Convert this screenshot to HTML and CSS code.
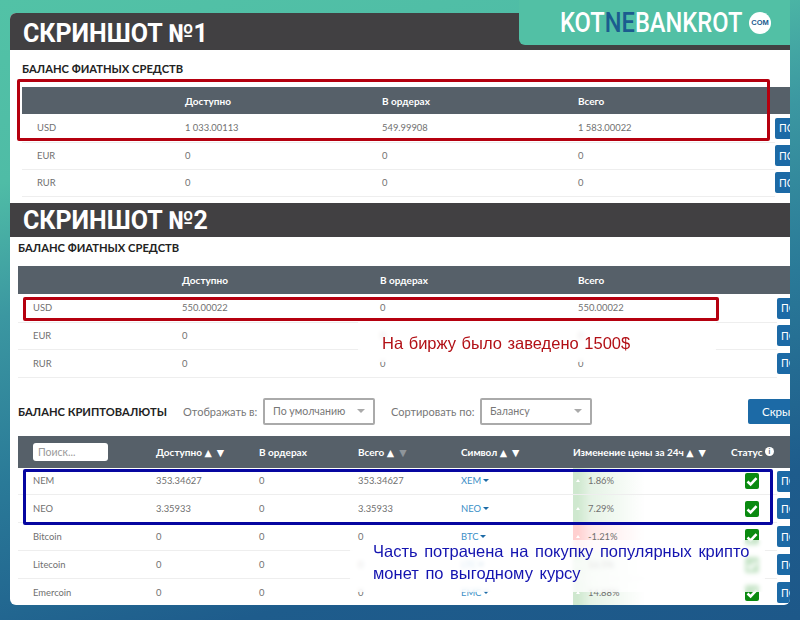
FILE: index.html
```html
<!DOCTYPE html>
<html lang="en">
    <head>
        <meta charset="UTF-8">
        <title>Скриншоты баланса</title>
        <link rel="stylesheet" href="styles.css">
    </head>
    <body>
        <div class="card">
            <h1 class="shot-title">СКРИНШОТ №1</h1>
            <section class="shot-one">
                <h2 class="section-name">БАЛАНС ФИАТНЫХ СРЕДСТВ</h2>
                <table class="balance fiat-one">
                    <thead>
                        <tr><th></th><th>Доступно</th><th>В ордерах</th><th>Всего</th><th></th></tr>
                    </thead>
                    <tbody>
                        <tr><td>USD</td><td>1 033.00113</td><td>549.99908</td><td>1 583.00022</td><td><button class="btn-fill">ПОПОЛНИТЬ</button></td></tr>
                        <tr><td>EUR</td><td>0</td><td>0</td><td>0</td><td><button class="btn-fill">ПОПОЛНИТЬ</button></td></tr>
                        <tr><td>RUR</td><td>0</td><td>0</td><td>0</td><td><button class="btn-fill">ПОПОЛНИТЬ</button></td></tr>
                    </tbody>
                </table>
            </section>

            <h1 class="shot-title">СКРИНШОТ №2</h1>
            <section class="shot-two">
                <h2 class="section-name">БАЛАНС ФИАТНЫХ СРЕДСТВ</h2>
                <table class="balance fiat-two">
                    <thead>
                        <tr><th></th><th>Доступно</th><th>В ордерах</th><th>Всего</th><th></th></tr>
                    </thead>
                    <tbody>
                        <tr><td>USD</td><td>550.00022</td><td>0</td><td>550.00022</td><td><button class="btn-fill">ПОПОЛНИТЬ</button></td></tr>
                        <tr><td>EUR</td><td>0</td><td>0</td><td>0</td><td><button class="btn-fill">ПОПОЛНИТЬ</button></td></tr>
                        <tr><td>RUR</td><td>0</td><td>0</td><td>0</td><td><button class="btn-fill">ПОПОЛНИТЬ</button></td></tr>
                    </tbody>
                </table>

                <div class="toolbar">
                    <h2 class="section-name toolbar-name">БАЛАНС КРИПТОВАЛЮТЫ</h2>
                    <label class="show-label">Отображать в:</label>
                    <div class="fake-select"><span>По умолчанию</span><i class="select-arrow"></i></div>
                    <label class="sort-label">Сортировать по:</label>
                    <div class="fake-select"><span>Балансу</span><i class="select-arrow"></i></div>
                    <button class="btn-hide">Скрыть нулевые</button>
                </div>

                <table class="balance crypto">
                    <thead>
                        <tr>
                            <th><input class="search" type="text" placeholder="Поиск..."></th>
                            <th>Доступно <span class="sort">▲ ▼</span></th>
                            <th>В ордерах</th>
                            <th>Всего <span class="sort">▲ <span class="sort-off">▼</span></span></th>
                            <th>Символ <span class="sort">▲ ▼</span></th>
                            <th>Изменение цены за 24ч <span class="sort">▲ ▼</span></th>
                            <th>Статус <span class="info">i</span></th>
                            <th></th>
                        </tr>
                    </thead>
                    <tbody>
                        <tr><td>NEM</td><td>353.34627</td><td>0</td><td>353.34627</td><td><a class="coin">XEM</a></td><td class="change up">1.86%</td><td><span class="status"><svg viewBox="0 0 14 14"><path d="M2.5 7.5 L5.6 10.4 L11.5 4.2"/></svg></span></td><td><button class="btn-fill">ПОПОЛНИТЬ</button></td></tr>
                        <tr><td>NEO</td><td>3.35933</td><td>0</td><td>3.35933</td><td><a class="coin">NEO</a></td><td class="change up">7.29%</td><td><span class="status"><svg viewBox="0 0 14 14"><path d="M2.5 7.5 L5.6 10.4 L11.5 4.2"/></svg></span></td><td><button class="btn-fill">ПОПОЛНИТЬ</button></td></tr>
                        <tr><td>Bitcoin</td><td>0</td><td>0</td><td>0</td><td><a class="coin">BTC</a></td><td class="change down">-1.21%</td><td><span class="status"><svg viewBox="0 0 14 14"><path d="M2.5 7.5 L5.6 10.4 L11.5 4.2"/></svg></span></td><td><button class="btn-fill">ПОПОЛНИТЬ</button></td></tr>
                        <tr><td>Litecoin</td><td>0</td><td>0</td><td>0</td><td><a class="coin">LTC</a></td><td class="change up">16.5%</td><td><span class="status"><svg viewBox="0 0 14 14"><path d="M2.5 7.5 L5.6 10.4 L11.5 4.2"/></svg></span></td><td><button class="btn-fill">ПОПОЛНИТЬ</button></td></tr>
                        <tr><td>Emercoin</td><td>0</td><td>0</td><td>0</td><td><a class="coin">EMC</a></td><td class="change up">14.88%</td><td><span class="status"><svg viewBox="0 0 14 14"><path d="M2.5 7.5 L5.6 10.4 L11.5 4.2"/></svg></span></td><td><button class="btn-fill">ПОПОЛНИТЬ</button></td></tr>
                    </tbody>
                </table>
            </section>
        </div>

        <!-- overlays on top of the screenshots -->
        <div class="logo-tab">
            <span class="logo-text">KOT<b>NE</b>BANKROT</span>
            <span class="logo-com">COM</span>
        </div>
        <div class="frame red frame-one"></div>
        <div class="frame red frame-two"></div>
        <div class="frame blue frame-three"></div>
        <div class="note note-red">На биржу было заведено 1500$</div>
        <div class="note note-blue">Часть потрачена на покупку популярных крипто монет по выгодному курсу</div>
    </body>
</html>
```

FILE: styles.css
```css
* { box-sizing: border-box; }
html, body { height: 620px; }
body {
    margin: 0;
    overflow: hidden;
    position: relative;
    padding: 13px 10px 0;
    font-family: Lato, "Open Sans", sans-serif;
    background: linear-gradient(165deg, #52c2a6 0%, #4fbca6 22%, #3b97a1 38%, #2a7a98 58%, #1e5c8c 82%, #1d5889 100%);
}

.card {
    width: 780px;
    height: 592px;
    background: #fff;
    border-radius: 6px;
    overflow: hidden;
}

.shot-title {
    margin: 0;
    height: 37px;
    padding: 2px 0 0 13px;
    background: #414042;
    color: #fff;
    font: 700 25px/37px Roboto, sans-serif;
}
.shot-one + .shot-title { height: 34px; padding-top: 1px; line-height: 34px; }

.section-name {
    margin: 0;
    color: #222;
    font-size: 11.2px;
    font-weight: 700;
    white-space: nowrap;
}

.shot-one { height: 153px; padding: 12px 0 0 12px; }
.shot-one > .section-name { line-height: 14px; margin-bottom: 11px; }
.shot-two { padding: 4px 0 0 8px; }
.shot-two > .section-name { line-height: 14px; margin-bottom: 11px; }

.balance {
    border-collapse: collapse;
    table-layout: fixed;
    color: #707070;
    font-size: 9.4px;
}
.balance th {
    background: #566069;
    color: #fff;
    font-size: 10px;
    font-weight: 700;
    text-align: left;
    padding: 0;
    white-space: nowrap;
}
.balance td {
    height: 28px;
    padding: 0;
    border-bottom: 1px solid #eee;
    white-space: nowrap;
}
.balance td:last-child { border-bottom: none; overflow: visible; }

.fiat-one { width: 768px; }
.fiat-one thead tr { height: 27px; }
.fiat-one tbody tr + tr td { height: 27px; }
.fiat-one th:nth-child(1), .fiat-one td:nth-child(1) { width: 163px; padding-left: 15px; }
.fiat-one th:nth-child(2) { width: 197px; }
.fiat-one th:nth-child(3) { width: 196px; }
.fiat-one th:nth-child(4) { width: 197px; }

.fiat-two { width: 772px; }
.fiat-two thead tr { height: 28px; }
.fiat-two tbody tr:nth-child(2) td { height: 27px; }
.fiat-two th:nth-child(1), .fiat-two td:nth-child(1) { width: 164px; padding-left: 15px; }
.fiat-two th:nth-child(2) { width: 198px; }
.fiat-two th:nth-child(3) { width: 198px; }
.fiat-two th:nth-child(4) { width: 199px; }

.btn-fill {
    display: block;
    width: 90px;
    height: 21px;
    padding: 0 0 0 4px;
    border: none;
    border-radius: 2px;
    background: #1c6aa6;
    color: #fff;
    font: 400 10.5px Lato, sans-serif;
    text-align: left;
}

.toolbar {
    display: flex;
    align-items: center;
    height: 27px;
    margin-top: 20px;
    margin-bottom: 11px;
    color: #777;
    font-size: 11px;
    white-space: nowrap;
}
.toolbar-name { flex: none; width: 165px; }
.show-label { flex: none; width: 80px; }
.sort-label { flex: none; margin-left: 16px; width: 89px; }
.fake-select {
    flex: none;
    display: flex;
    align-items: center;
    justify-content: space-between;
    width: 112px;
    height: 27px;
    padding: 0 8px;
    border: 2px solid #aaa;
    border-radius: 2px;
    color: #777;
    font-size: 10.6px;
}
.select-arrow {
    width: 0;
    height: 0;
    border: 4px solid transparent;
    border-top: 4px solid #aaa;
    border-bottom: 0;
}
.btn-hide {
    flex: none;
    margin-left: 156px;
    width: 110px;
    height: 25px;
    padding: 0 0 0 14px;
    border: none;
    border-radius: 2px;
    background: #1c6aa6;
    color: #fff;
    font: 400 11.5px Lato, sans-serif;
    text-align: left;
}

.crypto { width: 772px; }
.crypto thead tr { height: 32px; }
.crypto tbody tr:first-child td { height: 27px; }
.crypto th:nth-child(1), .crypto td:nth-child(1) { width: 138px; padding-left: 15px; }
.crypto th:nth-child(2) { width: 103px; }
.crypto th:nth-child(3) { width: 99px; }
.crypto th:nth-child(4) { width: 103px; }
.crypto th:nth-child(5) { width: 112px; }
.crypto th:nth-child(6) { width: 158px; }
.crypto th:nth-child(7) { width: 46px; }
.sort { font: 400 9.5px "DejaVu Sans", sans-serif; word-spacing: 2px; }
.sort-off { color: #8e959b; }
.search {
    display: block;
    width: 75px;
    height: 18px;
    padding: 0 5px;
    border: none;
    border-radius: 3px;
    background: #fff;
    font: 400 10.5px Lato, sans-serif;
}
.search::placeholder { color: #999; }
.info {
    display: inline-block;
    width: 9px;
    height: 9px;
    border-radius: 50%;
    background: #fff;
    color: #566069;
    font-size: 7px;
    line-height: 9px;
    text-align: center;
    vertical-align: 2px;
}
.coin { color: #3a8fc7; }
.coin::after {
    content: "";
    display: inline-block;
    margin-left: 2px;
    vertical-align: 2px;
    border: 3.5px solid transparent;
    border-top: 3px solid #1c6aa6;
    border-bottom: 0;
}
.change { padding-left: 15px !important; }
.change::before {
    content: "";
    display: inline-block;
    margin: 0 8px 0 -12px;
    vertical-align: 2px;
    border: 2px solid transparent;
    border-top: 0;
    border-bottom: 3px solid #fff;
}
.change.up { background: linear-gradient(90deg, #cfe8cf 0, #cfe8cf 5px, #e6f3e6 18px, #fff 72px); }
.change.down { background: linear-gradient(90deg, #ffd0d0 0, #ffd0d0 5px, #ffe8e8 18px, #fff 72px); }
.status {
    display: block;
    width: 14px;
    height: 16px;
    margin-left: 14px;
    border-radius: 2px;
    background: #0a8a10;
}
.status svg {
    display: block;
    width: 14px;
    height: 16px;
    fill: none;
    stroke: #fff;
    stroke-width: 2.6;
}

.logo-tab {
    position: absolute;
    top: 0;
    left: 519px;
    width: 271px;
    height: 45px;
    display: flex;
    align-items: center;
    padding: 0 0 0 41px;
    background: #52c0a5;
    border-radius: 0 0 0 6px;
}
.logo-text {
    color: #fff;
    font: 500 28px/1 Roboto, sans-serif;
    transform: scaleX(.845);
    transform-origin: left center;
    width: 189px;
    flex: none;
    white-space: nowrap;
}
.logo-text b { color: #1b5c8f; font-weight: 500; }
.logo-com {
    flex: none;
    width: 22px;
    height: 22px;
    border-radius: 50%;
    background: #fff;
    color: #1b5c8f;
    font: 700 7.5px/22px "Liberation Sans", sans-serif;
    text-align: center;
}

.frame {
    position: absolute;
    border-width: 3px;
    border-style: solid;
    border-radius: 2px;
}
.red { border-color: #b5000f; }
.blue { border-color: #0606a0; }
.frame-one { left: 17px; top: 79px; width: 753px; height: 62px; }
.frame-two { left: 23px; top: 297px; width: 696px; height: 24px; }
.frame-three { left: 23px; top: 469px; width: 750px; height: 56px; }

.note {
    position: absolute;
    background: rgba(255, 255, 255, .78);
    font-family: "Liberation Sans", sans-serif;
    font-size: 16.5px;
    word-spacing: 1px;
    backdrop-filter: blur(2px);
}
.note-red {
    left: 358px;
    top: 322px;
    width: 358px;
    height: 40px;
    padding-left: 24px;
    color: #b21016;
    line-height: 43px;
}
.note-blue {
    left: 350px;
    top: 540px;
    width: 415px;
    height: 52px;
    padding: 0 4px 0 23px;
    color: #1414b0;
    line-height: 22px;
    word-spacing: 2px;
}
```
